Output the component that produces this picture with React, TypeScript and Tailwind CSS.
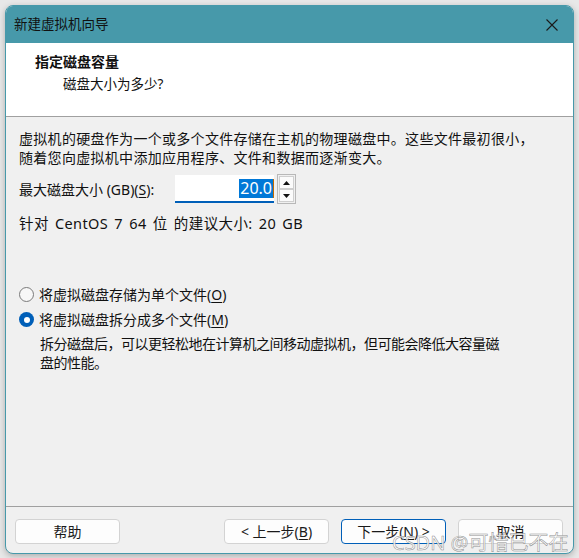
import React from "react";

const ui = "font-['Noto_Sans','Noto_Sans_CJK_SC',sans-serif]";

function CloseIcon() {
  return (
    <svg width="12" height="12" viewBox="0 0 12 12" className="text-[#1a1a1a]">
      <path d="M0.5 0.5 L11.5 11.5 M11.5 0.5 L0.5 11.5" stroke="currentColor" strokeWidth="1.1" fill="none" />
    </svg>
  );
}

function Radio({ checked }: { checked?: boolean }) {
  if (checked) {
    return (
      <span className="flex h-[15px] w-[15px] shrink-0 items-center justify-center rounded-full bg-[#005fb8]">
        <span className="h-[6px] w-[6px] rounded-full bg-white" />
      </span>
    );
  }
  return <span className="h-[15px] w-[15px] shrink-0 rounded-full border border-[#7a7a7a] bg-[#f7f7f7]" />;
}

function Spinner() {
  return (
    <div className="flex h-[30px] w-[19px] flex-col border border-[#b8b8b8] bg-[#f0f0f0] p-px">
      <div className="flex flex-1 items-center justify-center border border-[#cfcfcf] bg-[#fbfbfb]">
        <svg width="7" height="4" viewBox="0 0 7 4">
          <path d="M0 4 L3.5 0 L7 4 Z" fill="#111" />
        </svg>
      </div>
      <div className="flex flex-1 items-center justify-center border border-[#cfcfcf] bg-[#fbfbfb]">
        <svg width="7" height="4" viewBox="0 0 7 4">
          <path d="M0 0 L3.5 4 L7 0 Z" fill="#111" />
        </svg>
      </div>
    </div>
  );
}

function Button({ children, primary }: { children: React.ReactNode; primary?: boolean }) {
  return (
    <button
      className={
        "flex h-[25px] w-[105px] items-center justify-center rounded-[4px] bg-[#fdfdfd] text-[14px] text-[#1a1a1a] " +
        (primary ? "border border-[#005fb8]" : "border border-[#d3d3d3]")
      }
    >
      {children}
    </button>
  );
}

export default function App() {
  return (
    <div className={`relative h-[558px] w-[579px] bg-[#e8e8e8] pl-[5px] pt-[5px] ${ui}`}>
      <div className="flex h-[549px] w-[569px] flex-col overflow-hidden rounded-[8px] border border-[#4799aa] bg-[#f0f0f0] shadow-[0_2px_6px_rgba(0,0,0,0.25)]">
        {/* title bar */}
        <div className="flex h-[37px] shrink-0 items-center justify-between bg-[#4799aa] pl-[8px] pr-[15px]">
          <span className="text-[13.5px] text-[#111]">新建虚拟机向导</span>
          <CloseIcon />
        </div>

        {/* header */}
        <div className="h-[74px] shrink-0 border-b border-[#a0a0a0] bg-white pl-[29px] pt-[8px]">
          <div className="text-[14px] font-bold leading-[22px] text-[#111]">指定磁盘容量</div>
          <div className="pl-[28px] text-[13.5px] leading-[22px] text-[#111]">磁盘大小为多少?</div>
        </div>

        {/* body */}
        <div className="flex-1 pl-[13px] pt-[12px] text-[14px] text-[#111]">
          <p className="leading-[19px] tracking-[0.3px]">
            虚拟机的硬盘作为一个或多个文件存储在主机的物理磁盘中。这些文件最初很小，
            <br />
            随着您向虚拟机中添加应用程序、文件和数据而逐渐变大。
          </p>

          <div className="mt-[7px] flex h-[30px] items-center">
            <span className="w-[156px] leading-[19px]">
              最大磁盘大小 (GB)(<span className="underline underline-offset-2">S</span>):
            </span>
            <div className="flex h-[28px] w-[99px] items-center justify-end border-b-2 border-[#005fb8] bg-white">
              <span className="bg-[#0078d7] px-px text-[16px] leading-[19px] text-white">20.0</span>
              <span className="h-[19px] w-px bg-[#c46a00]" />
            </div>
            <div className="ml-[3px]">
              <Spinner />
            </div>
          </div>

          <p className="mt-[10px] text-[14.5px] leading-[19px] tracking-[0.4px] [word-spacing:2px]">
            针对 CentOS 7 64 位 的建议大小: 20 GB
          </p>

          <div className="mt-[52px] flex h-[19px] items-center gap-[5px]">
            <Radio />
            <span className="leading-[19px]">
              将虚拟磁盘存储为单个文件(<span className="underline underline-offset-2">O</span>)
            </span>
          </div>
          <div className="mt-[6px] flex h-[19px] items-center gap-[5px]">
            <Radio checked />
            <span className="leading-[19px]">
              将虚拟磁盘拆分成多个文件(<span className="underline underline-offset-2">M</span>)
            </span>
          </div>
          <p className="mt-[5px] pl-[21px] leading-[19px] tracking-[-0.5px]">
            拆分磁盘后，可以更轻松地在计算机之间移动虚拟机，但可能会降低大容量磁
            <br />
            盘的性能。
          </p>
        </div>

        {/* footer */}
        <div className="flex h-[47px] shrink-0 items-start border-t border-[#a0a0a0] pl-[9px] pr-[10px] pt-[12px]">
          <Button>帮助</Button>
          <div className="ml-auto flex gap-[12px]">
            <Button>
              &lt; 上一步(<span className="underline underline-offset-2">B</span>)
            </Button>
            <Button primary>
              下一步(<span className="underline underline-offset-2">N</span>) &gt;
            </Button>
            <Button>取消</Button>
          </div>
        </div>
      </div>

      {/* watermark */}
      <div className="absolute left-[392px] top-[531px] whitespace-nowrap text-[20px] leading-[24px] text-[rgba(255,255,255,0.85)] [-webkit-text-stroke:0.5px_rgba(110,110,110,0.8)]">
        CSDN @可惜已不在
      </div>
    </div>
  );
}
